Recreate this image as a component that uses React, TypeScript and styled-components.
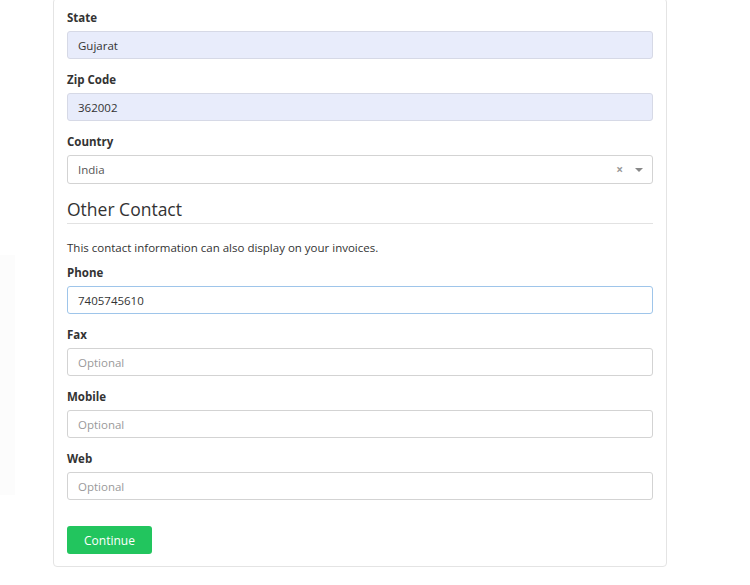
import React from "react";
import styled, { createGlobalStyle } from "styled-components";

const Global = createGlobalStyle`
  html, body { margin: 0; padding: 0; background: #ffffff; }
  body { font-family: "Open Sans", "Noto Sans", sans-serif; color: #333; }
  * { box-sizing: border-box; }
`;

const Page = styled.div`
  display: flex;
  width: 750px;
  height: 585px;
  overflow: hidden;
  background: #fff;
`;

const Side = styled.div`
  width: 15px;
  margin-top: 255px;
  height: 240px;
  background: #fcfcfc;
`;

const Card = styled.div`
  margin-left: 38px;
  width: 614px;
  margin-top: -2px;
  align-self: flex-start;
  border: 1px solid #e4e4e4;
  border-radius: 4px;
  padding: 10px 13px 12px 13px;
  display: flex;
  flex-direction: column;
`;

const Group = styled.div`
  display: flex;
  flex-direction: column;
  margin-bottom: 12px;
`;

const Label = styled.label`
  font-size: 11.5px;
  font-weight: 700;
  line-height: 18px;
  color: #333;
  margin-bottom: 4px;
`;

const Input = styled.input<{ $autofill?: boolean; $focus?: boolean }>`
  height: 28px;
  width: 100%;
  border: 1px solid ${(p) => (p.$focus ? "#9ec5ea" : p.$autofill ? "#d6d9e6" : "#d3d3d3")};
  border-radius: 3px;
  background: ${(p) => (p.$autofill ? "#e8ecfb" : "#fff")};
  padding: 0 10px;
  font-family: inherit;
  font-size: 11.5px;
  color: #333;
  outline: none;
  &::placeholder { color: #9a9a9a; }
`;

const Select = styled.div`
  height: 29px;
  border: 1px solid #d3d3d3;
  border-radius: 3px;
  display: flex;
  align-items: center;
  padding: 0 9px 0 10px;
  font-size: 11.5px;
  color: #555;
`;

const SelectValue = styled.span`
  flex: 1;
`;

const Clear = styled.span`
  color: #999;
  font-size: 12px;
  margin-right: 12px;
  font-weight: 700;
`;

const Caret = styled.span`
  width: 0;
  height: 0;
  border-left: 4px solid transparent;
  border-right: 4px solid transparent;
  border-top: 4px solid #888;
`;

const Heading = styled.h3`
  margin: 2px 0 0 0;
  font-size: 17.5px;
  font-weight: 400;
  line-height: 22px;
  color: #333;
  padding-bottom: 3px;
  border-bottom: 1px solid #e2e2e2;
`;

const Note = styled.p`
  margin: 15px 0 7px 0;
  font-size: 11.5px;
  line-height: 18px;
  color: #333;
`;

const Button = styled.button`
  margin-top: 14px;
  width: 85px;
  height: 28px;
  border: none;
  border-radius: 3px;
  background: #22c55e;
  color: #fff;
  font-family: inherit;
  font-size: 12px;
  align-self: flex-start;
`;

export default function App() {
  return (
    <Page>
      <Global />
      <Side />
      <Card>
        <Group>
          <Label>State</Label>
          <Input $autofill defaultValue="Gujarat" />
        </Group>
        <Group>
          <Label>Zip Code</Label>
          <Input $autofill defaultValue="362002" />
        </Group>
        <Group>
          <Label>Country</Label>
          <Select>
            <SelectValue>India</SelectValue>
            <Clear>×</Clear>
            <Caret />
          </Select>
        </Group>
        <Heading>Other Contact</Heading>
        <Note>This contact information can also display on your invoices.</Note>
        <Group>
          <Label>Phone</Label>
          <Input $focus defaultValue="7405745610" />
        </Group>
        <Group>
          <Label>Fax</Label>
          <Input placeholder="Optional" />
        </Group>
        <Group>
          <Label>Mobile</Label>
          <Input placeholder="Optional" />
        </Group>
        <Group>
          <Label>Web</Label>
          <Input placeholder="Optional" />
        </Group>
        <Button>Continue</Button>
      </Card>
    </Page>
  );
}
